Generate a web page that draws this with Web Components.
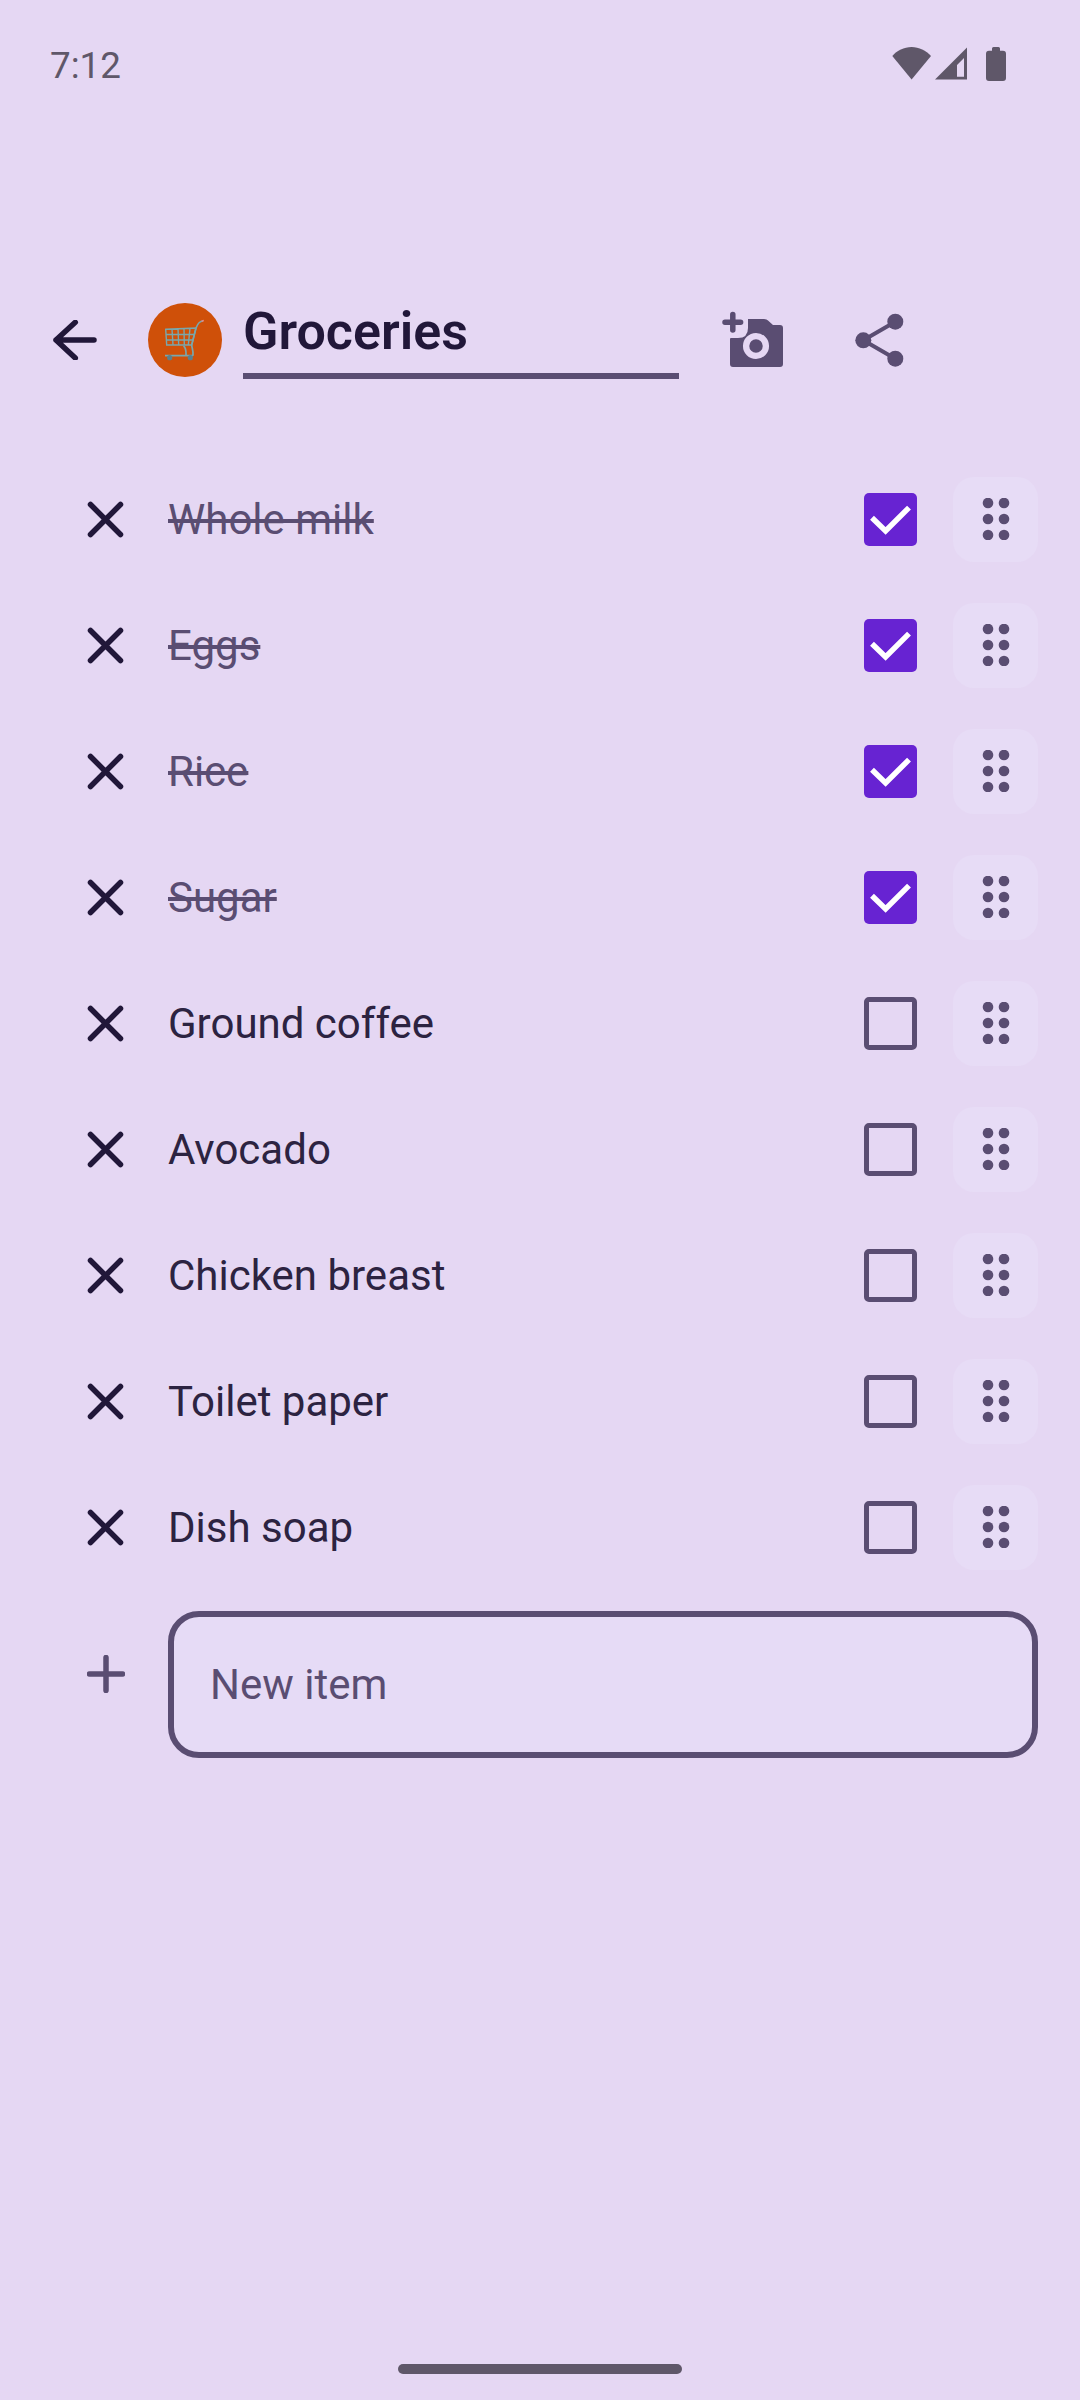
<!DOCTYPE html>
<html>
<head>
<meta charset="utf-8">
<style>
html, body { margin: 0; padding: 0; background: #e5d7f3; }
body { font-family: Roboto, "Noto Sans", sans-serif; }
</style>
</head>
<body>
<list-screen></list-screen>

<script>
(function() {

const DARK = '#211739';
const MUTED = '#5a4d72';

// --- status bar ---
class StatusBar extends HTMLElement {
	constructor() {
		super();
		this.attachShadow({mode: 'open'}).innerHTML = `
<style>
:host { display: flex; align-items: flex-start; justify-content: space-between; height: 120px; padding: 46px 74px 0 50px; box-sizing: border-box; color: #5f5769; }
.time { font: 400 36.75px/40px Roboto, sans-serif; }
svg { display: block; margin-top: 1px; }
</style>
<span class="time"><slot></slot></span>
<svg width="114" height="34" viewBox="0 0 114 34" fill="#5f5769">
<path d="M0.3 9 C5 3.5 12 0 19.6 0 C27 0 34 3.5 39 9 L19.6 32.5 Z"/>
<path fill-rule="evenodd" d="M43 32.5 L75 0.5 V32.5 Z M65 29.7 H72 V11 L65 18 Z"/>
<path d="M100 3.7 V1.5 Q100 0 101.5 0 H106.5 Q108 0 108 1.5 V3.7 H111 Q114 3.7 114 6.7 V31 Q114 34 111 34 H97 Q94 34 94 31 V6.7 Q94 3.7 97 3.7 Z"/>
</svg>`;
	}
}
customElements.define('status-bar', StatusBar);

// --- top app bar with title field ---
class TitleBar extends HTMLElement {
	constructor() {
		super();
		this.attachShadow({mode: 'open'}).innerHTML = `
<style>
:host { display: flex; align-items: center; height: 148px; padding-left: 53px; box-sizing: border-box; }
svg { display: block; flex: none; }
.back { margin-right: 51px; }
.field { width: 436px; height: 72px; margin-left: 21px; margin-right: 41px; border-bottom: 6px solid ${MUTED}; color: ${DARK}; font: 600 52px/62px Roboto, sans-serif; }
.share { margin-left: 69px; }
</style>
<svg class="back" width="44" height="40" viewBox="0 0 44 40" fill="none" stroke="${DARK}" stroke-width="5.5" stroke-linecap="round" stroke-linejoin="round"><path d="M3 20 H41 M22.3 2.3 L3 20 L22.3 38"/></svg>
<slot name="avatar"></slot>
<div class="field"><slot></slot></div>
<svg width="66" height="60" viewBox="0 0 66 60" fill="${MUTED}">
<path d="M10 29 V54 Q10 57 13 57 H60 Q63 57 63 54 V18 Q63 15 60 15 H53 L48 10.5 Q47 9 44 9 H28 V18 Q28 28 18 28 H11 Q10 28 10 29 Z"/>
<circle cx="36" cy="36" r="9.9" fill="none" stroke="#e5d7f3" stroke-width="6.3"/>
<path d="M5 12.2 H20.6 M12.8 4.5 V20" stroke="${MUTED}" stroke-width="5.5" stroke-linecap="round" fill="none"/>
</svg>
<svg class="share" width="50" height="56" viewBox="0 0 50 56" fill="${MUTED}">
<path d="M8.3 28.3 L40.3 9.7 M8.3 28.3 L40.3 46.7" stroke="${MUTED}" stroke-width="4"/>
<circle cx="8.3" cy="28.3" r="8"/><circle cx="40.3" cy="9.7" r="8"/><circle cx="40.3" cy="46.7" r="8"/>
</svg>`;
	}
}
customElements.define('title-bar', TitleBar);

class EmojiAvatar extends HTMLElement {
	constructor() {
		super();
		this.attachShadow({mode: 'open'}).innerHTML = `
<style>
:host { display: flex; flex: none; width: 74px; height: 74px; border-radius: 50%; background: #cf5009; align-items: center; justify-content: center; }
svg { display: block; }
</style>
<svg width="42" height="42" viewBox="0 0 42 42" fill="none" stroke="#79a7ac" stroke-width="1.4">
<path d="M1.7 10.3 L32 9 L27.7 26 L2.7 26 Z M8 10 L9 26 M14 9.8 L14.7 26 M20 9.5 L20.3 26 M26 9.3 L24.3 26 M2 15.5 H30.7 M2.3 21 H29"/>
<path d="M39 2 C35 2 33.5 5 32 9 L27.7 26 C28 30 29.5 31 29 36.7 M1 36.7 H29 M19.5 27 C22.5 29 22 33 22 36.7" stroke-width="1.7"/>
<path d="M37.5 2.2 L39.8 1.6" stroke="#e58a8a" stroke-width="1.5"/>
<circle cx="5.7" cy="38.7" r="2.6" fill="#5d7f8c" stroke="none"/><circle cx="26.3" cy="38.7" r="2.6" fill="#5d7f8c" stroke="none"/>
</svg>`;
	}
}
customElements.define('emoji-avatar', EmojiAvatar);

// --- one row of the list ---
class ListItem extends HTMLElement {
	constructor() {
		super();
		const done = this.hasAttribute('checked');
		this.attachShadow({mode: 'open'}).innerHTML = `
<style>
:host { display: flex; align-items: center; height: 126px; padding: 0 42px; box-sizing: border-box; }
.del { flex: none; width: 126px; display: flex; justify-content: center; }
.label { flex: 1; padding-top: 2px; font: 400 42px/56px Roboto, sans-serif; color: #2c2341; }
:host([checked]) .label { color: ${MUTED}; text-decoration: line-through; }
.box { flex: none; width: 53px; height: 53px; box-sizing: border-box; border: 5px solid ${MUTED}; border-radius: 5px; margin-right: 36px; }
:host([checked]) .box { background: #6723d2; border: none; }
.box svg { display: block; }
.handle { flex: none; width: 85px; height: 85px; border-radius: 21px; background: #e7dcf6; display: flex; align-items: center; justify-content: center; }
</style>
<div class="del"><svg width="37" height="37" viewBox="0 0 37 37" fill="none" stroke="${DARK}" stroke-width="5.5" stroke-linecap="round"><path d="M3.5 3.5 L33.5 33.5 M33.5 3.5 L3.5 33.5"/></svg></div>
<div class="label"><slot></slot></div>
<div class="box">${done ? `<svg width="53" height="53" viewBox="0 0 53 53" fill="none" stroke="#fff" stroke-width="5.5"><path d="M8 24.7 L21.6 38 L45 14.6"/></svg>` : ''}</div>
<div class="handle"><svg width="28" height="42" viewBox="0 0 28 42" fill="${MUTED}"><circle cx="6" cy="5" r="5.3"/><circle cx="22" cy="5" r="5.3"/><circle cx="6" cy="21" r="5.3"/><circle cx="22" cy="21" r="5.3"/><circle cx="6" cy="37" r="5.3"/><circle cx="22" cy="37" r="5.3"/></svg></div>`;
	}
}
customElements.define('list-item', ListItem);

// --- add row ---
class NewItem extends HTMLElement {
	constructor() {
		super();
		this.attachShadow({mode: 'open'}).innerHTML = `
<style>
:host { display: flex; height: 147px; padding: 0 42px; margin-top: 21px; box-sizing: border-box; }
.add { flex: none; width: 126px; height: 126px; padding-left: 1px; box-sizing: border-box; display: flex; align-items: center; justify-content: center; }
.input { flex: 1; box-sizing: border-box; border: 6px solid ${MUTED}; border-radius: 31px; background: #e6dbf6; padding: 0 36px; display: flex; align-items: center; color: ${MUTED}; font: 400 42px/56px Roboto, sans-serif; }
</style>
<div class="add"><svg width="38" height="38" viewBox="0 0 38 38" fill="none" stroke="${MUTED}" stroke-width="5.5" stroke-linecap="round"><path d="M2.5 19 H35.5 M19 2.5 V35.5"/></svg></div>
<div class="input"><slot></slot></div>`;
	}
}
customElements.define('new-item', NewItem);

class HomeBar extends HTMLElement {
	constructor() {
		super();
		this.attachShadow({mode: 'open'}).innerHTML = `
<style>
:host { display: flex; justify-content: center; margin-top: auto; padding-bottom: 26px; }
i { display: block; width: 284px; height: 10px; border-radius: 5px; background: #5f5769; }
</style>
<i></i>`;
	}
}
customElements.define('home-bar', HomeBar);

// --- whole screen ---
class ListScreen extends HTMLElement {
	constructor() {
		super();
		const items = [
			['Whole milk', true], ['Eggs', true], ['Rice', true], ['Sugar', true],
			['Ground coffee', false], ['Avocado', false], ['Chicken breast', false],
			['Toilet paper', false], ['Dish soap', false]
		];
		this.attachShadow({mode: 'open'}).innerHTML = `
<style>
:host { display: flex; flex-direction: column; width: 1080px; height: 2400px; background: #e5d7f3; overflow: hidden; }
title-bar { margin-top: 146px; }
.list { margin-top: 42px; }
</style>
<status-bar>7:12</status-bar>
<title-bar><emoji-avatar slot="avatar"></emoji-avatar>Groceries</title-bar>
<div class="list">
${items.map(i => `<list-item${i[1] ? ' checked' : ''}>${i[0]}</list-item>`).join('')}
</div>
<new-item>New item</new-item>
<home-bar></home-bar>`;
	}
}
customElements.define('list-screen', ListScreen);

})();
</script>
</body>
</html>
